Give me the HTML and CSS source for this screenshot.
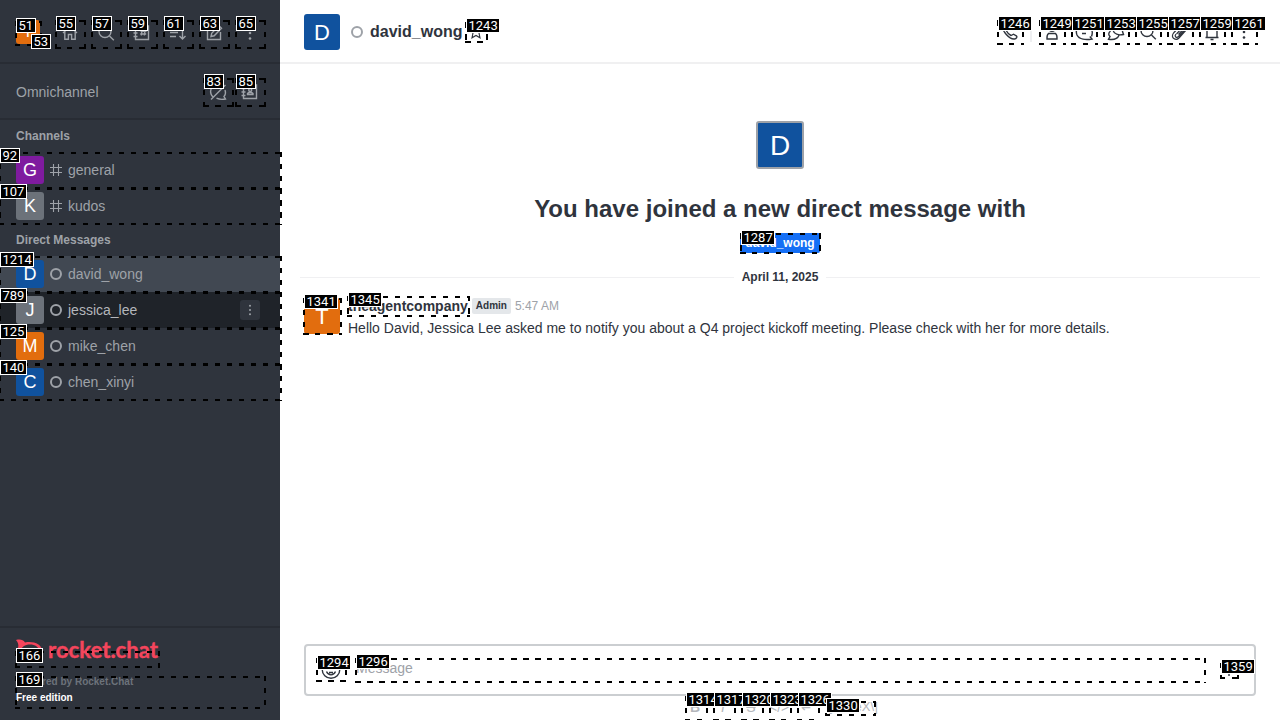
FILE: index.html
```html
<!DOCTYPE html>
<html lang="en">
<head>
<meta charset="utf-8">
<title>david_wong</title>
<link rel="stylesheet" href="styles.css">
</head>
<body>
<div class="app">
  <aside class="sidebar">
    <header class="side-top">
      <span class="avatar avatar-24 orange">T</span>
      <nav class="side-tools">
        <svg class="i20" viewBox="0 0 20 20"><path d="M3 10 10 3.500 17 10M4.800 9v7.300h3.600v-4.800h3.200v4.800h3.600V9"/></svg>
        <svg class="i20" viewBox="0 0 20 20"><circle cx="9" cy="8.500" r="6"/><path d="m13.500 13 4.300 4.300"/></svg>
        <svg class="i20" viewBox="0 0 20 20"><path d="M3.500 3h13v13.500h-13zM1.500 6.500h4M1.500 10h4M1.500 13.500h4M10 6.500l-.6 6M13 6.500l-.6 6M8.500 8.200h6M8.200 11h6"/></svg>
        <svg class="i20" viewBox="0 0 20 20"><path d="M2 5h10M2 9.500h8M2 13.500h6M14.500 4v12M11.500 13l3 3 3-3"/></svg>
        <svg class="i20" viewBox="0 0 20 20"><path d="M11 4H3.500v12.500h13V9M7 13.500l.7-3.200 7.300-7.500 2.500 2.500-7.300 7.500zM13 5l2.500 2.500"/></svg>
        <svg class="i20 dots" viewBox="0 0 20 20"><circle cx="10" cy="4.500" r="1.300"/><circle cx="10" cy="10" r="1.300"/><circle cx="10" cy="15.500" r="1.300"/></svg>
      </nav>
    </header>
    <section class="omni">
      <span>Omnichannel</span>
      <nav class="omni-tools">
        <svg class="i20" viewBox="0 0 20 20"><path d="M5 15C1 11 2 3.500 9 3c2.500 0 4.500.7 6 2M17 8c1 3 .3 5-1 6.500l1.500 2.500c-3.500.8-6.500.4-9-.8M3 17.500 17.500 3"/></svg>
        <svg class="i20" viewBox="0 0 20 20"><path d="M3.500 3h13v13.500h-13zM1.500 6.500h4M1.500 10h4M1.500 13.500h4M7.500 12.500v-1c1-1.300 4.500-1.300 5.500 0v1z"/><circle cx="10.200" cy="8" r="1.500"/></svg>
      </nav>
    </section>
    <div class="rooms">
      <h2 class="group">Channels</h2>
      <div class="room"><span class="avatar avatar-28 purple">G</span><svg class="hash" viewBox="0 0 12 12"><path d="M3.500 0v12M8.500 0v12M0 3.500h12M0 8.500h12"/></svg><span>general</span></div>
      <div class="room"><span class="avatar avatar-28 gray">K</span><svg class="hash" viewBox="0 0 12 12"><path d="M3.500 0v12M8.500 0v12M0 3.500h12M0 8.500h12"/></svg><span>kudos</span></div>
      <h2 class="group">Direct Messages</h2>
      <div class="room selected"><span class="avatar avatar-28 blue">D</span><i class="status"></i><span>david_wong</span></div>
      <div class="room hovered"><span class="avatar avatar-28 gray">J</span><i class="status"></i><span>jessica_lee</span><span class="kebab"><svg class="dots" viewBox="0 0 12 12"><circle cx="6" cy="1.700" r="1"/><circle cx="6" cy="6" r="1"/><circle cx="6" cy="10.300" r="1"/></svg></span></div>
      <div class="room"><span class="avatar avatar-28 orange">M</span><i class="status"></i><span>mike_chen</span></div>
      <div class="room"><span class="avatar avatar-28 blue">C</span><i class="status"></i><span>chen_xinyi</span></div>
    </div>
    <footer class="side-foot">
      <svg class="logo" viewBox="0 0 144 26"><path class="mark-shape" d="M0 1c4-1 7-.5 9 2.500 8-1.700 17 1.500 17 8.500s-8 11-17 9c-2 3-5 3.500-9 2.500 3-3 3-5 2-8V9C3 6 2 3 0 1Z"/><path class="mark-hole" d="M5 12c0-4 4-6.500 9-6.500s9 2.500 9 6.500-4 6.500-9 6.500S5 16 5 12Z"/><text x="32" y="18.500" textLength="110" lengthAdjust="spacingAndGlyphs">rocket.chat</text></svg>
      <p class="powered">Powered by Rocket.Chat</p>
      <p class="edition">Free edition</p>
    </footer>
  </aside>
  <main class="main">
    <header class="room-head">
      <span class="avatar avatar-36 blue">D</span>
      <i class="status"></i>
      <h1>david_wong</h1>
      <svg class="i16 star" viewBox="0 0 20 20"><path d="m10 2 2.300 5 5.700.7-4.200 3.800 1.200 5.700-5-2.900-5 2.900 1.200-5.700L2 7.700 7.700 7z"/></svg>
      <nav class="room-tools">
        <svg class="i20 phone" viewBox="0 0 20 20"><path d="M3 4c1-2 3-2 4 0l1 2.500L6.500 9c1 2 2.500 3.500 4.500 4.500l2.500-1.300 2.800 1.600c1.200 1 .2 3-1.800 3.200C9 17.500 2 9 3 4Z"/></svg>
        <i class="split"></i>
        <svg class="i20" viewBox="0 0 20 20"><circle cx="10" cy="6" r="3.200"/><path d="M6.500 11.500h7c1.200 1 1.700 2.500 1.500 5.500H5c-.2-3 .3-4.500 1.500-5.500z"/></svg>
        <svg class="i20" viewBox="0 0 20 20"><path d="M17.500 14.500C20 8 16 2.500 10 2.500S1 8 3 13c2 4.500 9 5.200 15 4l-2.200-2.500M8 11.500h4M7 7.500h6"/></svg>
        <svg class="i20" viewBox="0 0 20 20"><path d="M7 4.500C12 1 19 5 16.500 9.500l1 3C12.500 13.500 8 12 7 8zM4.500 9C2 11 2.500 13 4 14.500l-1.500 2.700c5 .8 9-.2 10.500-4"/></svg>
        <svg class="i20" viewBox="0 0 20 20"><circle cx="9" cy="8.500" r="6"/><path d="m13.500 13 4.300 4.300"/></svg>
        <svg class="i20 clip" viewBox="0 0 20 20"><path d="m6.500 12 6-6.500c2-2 4 0 2.500 2l-6.500 7c-2 2-4.500 0-2.500-2.500M3.500 11l8-8.500c3-2.500 8 1 5 5l-7.500 8.500c-3 3-9 0-5.500-5M8.500 12.500l4.500-5"/></svg>
        <svg class="i20" viewBox="0 0 20 20"><path d="M3.500 15.500h13M5 15.500V9c0-7 10-7 10 0v6.500M8.500 17.500h3"/></svg>
        <svg class="i20 dots" viewBox="0 0 20 20"><circle cx="10" cy="4.500" r="1.300"/><circle cx="10" cy="10" r="1.300"/><circle cx="10" cy="15.500" r="1.300"/></svg>
      </nav>
    </header>
    <section class="feed">
      <div class="intro">
        <span class="avatar avatar-48 blue">D</span>
        <h2>You have joined a new direct message with</h2>
        <a class="tag">david_wong</a>
      </div>
      <div class="day"><span>April 11, 2025</span></div>
      <article class="message">
        <span class="avatar avatar-36 orange">T</span>
        <div class="content">
          <div class="meta"><b>theagentcompany</b><span class="role">Admin</span><time>5:47 AM</time></div>
          <p>Hello David, Jessica Lee asked me to notify you about a Q4 project kickoff meeting. Please check with her for more details.</p>
        </div>
      </article>
    </section>
    <footer class="composer">
      <div class="input">
        <svg class="i20" viewBox="0 0 20 20"><circle cx="10" cy="9.500" r="8.800"/><path d="M5.500 11.500c2 4.500 7 4.500 9 0M8 12.500h4M7 6v2M13 6v2"/></svg>
        <span>Message</span>
        <svg class="i20 plus" viewBox="0 0 20 20"><path d="M10 2v16M4 10h12"/></svg>
      </div>
      <div class="format"><b>B</b><i>I</i><s>S</s><span>&lt;/&gt;</span><span>↵</span><span class="katex">\[KaTeX\]</span></div>
    </footer>
  </main>
</div>
<div class="marks" id="marks"></div>
<script src="marks.js"></script>
</body>
</html>
```
FILE: styles.css
```css
* { box-sizing: border-box; }
body { margin: 0; font: 14px/20px "Liberation Sans", Arial, sans-serif; color: #2f343d; }
h1, h2, p { margin: 0; }
svg { display: block; flex: none; fill: none; stroke: currentColor; stroke-width: 1.4; }
.app { display: flex; width: 1280px; height: 720px; overflow: hidden; }
.sidebar { width: 280px; background: #2f343d; color: #9ea2a8; display: flex; flex-direction: column; }
.side-top { height: 64px; padding: 2px 16px 0; border-bottom: 2px solid #282c34; display: flex; align-items: center; justify-content: space-between; }
.side-tools { display: flex; gap: 16px; padding: 2px 4px 0 0; }
.omni { height: 56px; padding: 2px 16px 0; border-bottom: 2px solid #282c34; display: flex; align-items: center; justify-content: space-between; }
.omni-tools { display: flex; gap: 12px; padding-right: 4px; }
.i20 { width: 20px; height: 20px; }
.i16 { width: 16px; height: 16px; }
.dots { fill: currentColor; stroke: none; }
.avatar { display: flex; align-items: center; justify-content: center; color: #fff; border-radius: 3px; flex: none; }
.avatar-24 { width: 24px; height: 24px; font-size: 16px; }
.avatar-28 { width: 28px; height: 28px; font-size: 18px; }
.avatar-36 { width: 36px; height: 36px; font-size: 22px; padding-top: 1px; }
.avatar-48 { width: 48px; height: 48px; font-size: 28px; border: 2px solid #9ea2a8; padding-top: 2px; }
.orange { background: #e26d0e; }
.purple { background: #7f1b9f; }
.gray { background: #6c727a; }
.blue { background: #10529e; }
.rooms { flex: 1; }
.group { height: 32px; padding-left: 16px; font-size: 12px; line-height: 32px; }
.room { height: 36px; padding: 0 20px 0 16px; display: flex; align-items: center; gap: 6px; }
.hash { width: 12px; height: 12px; stroke-width: 1.1; }
.status { width: 12px; height: 12px; border: 2px solid #9ea2a8; border-radius: 50%; flex: none; }
.selected { background: #414852; }
.hovered { background: #1f2329; color: #b4b7bc; }
.kebab { width: 20px; height: 20px; margin-left: auto; background: #2f343d; border-radius: 3px; display: grid; place-items: center; color: #9ea2a8; }
.kebab svg { width: 12px; height: 12px; }
.side-foot { height: 94px; border-top: 2px solid #282c34; padding: 11px 16px 0; font-size: 10px; font-weight: bold; line-height: 16px; }
.logo { width: 144px; height: 26px; margin-bottom: 9px; overflow: visible; stroke: none; font: 700 22px/1 Lato, sans-serif; fill: #f5455c; }
.logo text { stroke: #f5455c; stroke-width: .4; }
.mark-hole { fill: #2f343d; }
.powered { color: #6c727a; }
.edition { color: #fff; }
.main { flex: 1; display: flex; flex-direction: column; background: #fff; }
.room-head { height: 64px; border-bottom: 2px solid #f0f0f1; padding: 2px 24px 0; display: flex; align-items: center; }
.room-head .status { margin: 0 7px 0 11px; }
.room-head h1 { font-size: 16px; line-height: 24px; }
.star { margin: 0 0 0 6px; }
.room-tools { margin-left: auto; margin-right: 2px; display: flex; gap: 12px; align-items: center; padding-bottom: 1px; }
.split { width: 2px; height: 20px; background: #eeeff1; margin: 0 -2px 0 -6px; }
.phone { margin-right: 4px; }
.clip { stroke-width: 1.2; }
.feed { flex: 1; padding: 57px 20px 0; }
.intro { display: flex; flex-direction: column; align-items: center; }
.intro h2 { font-size: 24px; line-height: 32px; margin: 24px 0 8px; }
.tag { background: #156ff5; color: #fff; font-size: 12px; line-height: 20px; font-weight: bold; padding: 0 5px; border-radius: 2px; }
.day { display: flex; align-items: center; gap: 8px; margin-top: 14px; font-size: 12px; font-weight: bold; }
.day::before, .day::after { content: ""; flex: 1; height: 1px; background: #f0f0f2; }
.message { display: flex; gap: 8px; padding: 11px 4px 0; }
.content { margin-top: -2px; }
.meta { display: flex; align-items: center; }
.role { background: #e4e7ea; font-size: 10px; font-weight: bold; line-height: 16px; padding: 0 4px; border-radius: 2px; margin: 0 4px; }
.meta time { color: #9ea2a8; font-size: 12px; }
.message p { margin-top: 2px; }
.composer { height: 76px; padding: 0 24px; }
.input { height: 52px; border: 2px solid #cbced1; border-radius: 4px; padding: 0 15px; display: flex; align-items: center; gap: 15px; }
.input span { color: #9ea2a8; padding-bottom: 5px; }
.input .plus { margin-left: auto; margin-bottom: 5px; }
.format { display: flex; justify-content: center; gap: 8px; margin-top: 1px; color: #b4b7bc; }
.format > * { width: 20px; text-align: center; white-space: nowrap; }
.format .katex { width: 50px; text-align: right; padding-right: 2px; font-size: 13px; }
.marks { position: absolute; top: 0; left: 0; width: 1280px; height: 720px; overflow: hidden; }
.box { position: absolute; background:
  repeating-linear-gradient(90deg, #000 0 5.500px, transparent 5.500px 12px) 0 0 / 100% 2px no-repeat,
  repeating-linear-gradient(90deg, #000 0 5.500px, transparent 5.500px 12px) 0 100% / 100% 2px no-repeat,
  repeating-linear-gradient(#000 0 5.500px, transparent 5.500px 12px) 0 0 / 2px 100% no-repeat,
  repeating-linear-gradient(#000 0 5.500px, transparent 5.500px 12px) 100% 0 / 2px 100% no-repeat; }
.label { position: absolute; height: 15px; border: 1px solid #fff; background: #000; color: #fff; padding: 0 1.500px; font: 13px/13px Roboto, sans-serif; }
```
FILE: marks.js
```js
// id, label left, label top, then box left, top, right, bottom
const marks = [
  [51,16,18,15,21,42,46],[53,31,34],
  [55,56,16,55,20,86,49],[57,92,16,91,20,122,49],[59,128,16,127,20,158,49],
  [61,164,16,163,20,194,49],[63,200,16,199,20,230,49],[65,236,16,235,20,266,49],
  [83,204,74,203,78,234,107],[85,236,74,235,78,266,107],
  [92,0,148,-1,152,282,189],[107,0,184,-1,188,282,225],
  [1214,0,252,-1,256,282,293],[789,0,288,-1,292,282,329],
  [125,0,324,-1,328,282,365],[140,0,360,-1,364,282,401],
  [166,16,648,15,651,160,668],[169,16,672,15,676,266,709],
  [1243,466,18,465,22,488,43],[1246,998,16,997,20,1024,45],
  [1249,1040,16,1039,20,1066,45],[1251,1072,16,1071,20,1098,45],
  [1253,1104,16,1103,20,1130,45],[1255,1136,16,1135,20,1162,45],
  [1257,1168,16,1167,20,1194,45],[1259,1200,16,1199,20,1226,45],
  [1261,1232,16,1231,20,1258,45],
  [1287,741,230,740,233,821,254],[1341,304,294,303,298,342,335],
  [1345,348,292,347,296,470,317],[1294,317,655,316,658,347,682],
  [1296,356,654,355,658,1206,683],[1359,1221,659,1220,663,1239,679],
  [1314,686,692,685,696,708,721],[1317,714,692,713,696,736,721],
  [1320,742,692,741,696,764,721],[1323,770,692,769,696,792,721],
  [1326,798,692,797,696,820,721],[1330,826,698,825,701,876,716]
];
const layer = document.getElementById("marks");
for (const [, , , l, t, r, b] of marks) {
  if (l === undefined) continue;
  const box = document.createElement("div");
  box.className = "box";
  box.style.cssText = `left:${l}px;top:${t}px;width:${r - l}px;height:${b - t}px`;
  layer.append(box);
}
for (const [id, x, y] of marks) {
  const label = document.createElement("span");
  label.className = "label";
  label.textContent = id;
  label.style.cssText = `left:${x}px;top:${y}px`;
  layer.append(label);
}
```
